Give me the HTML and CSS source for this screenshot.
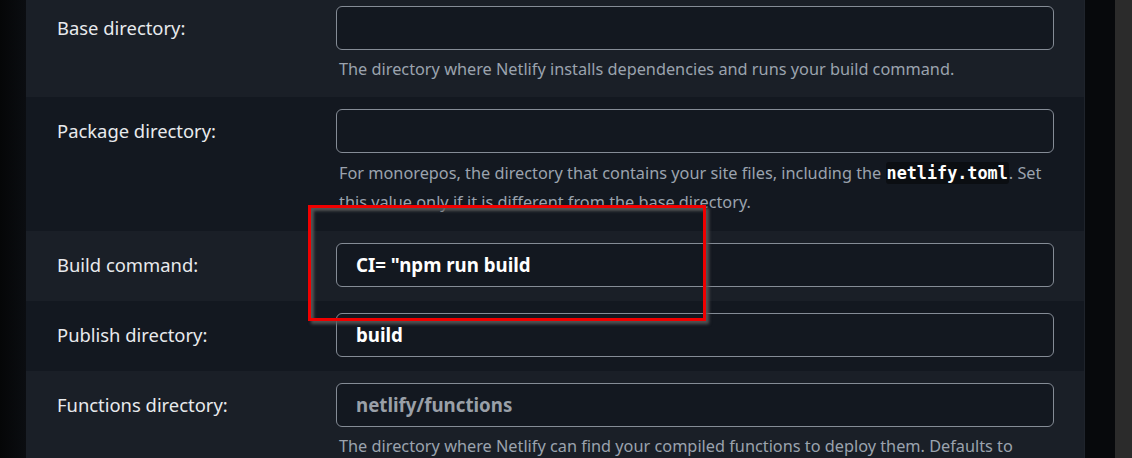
FILE: index.html
```html
<!DOCTYPE html>
<html lang="en">
<head>
<meta charset="utf-8">
<link rel="stylesheet" href="styles.css">
</head>
<body>
<div class="page">
  <div class="edge-left"></div>
  <div class="panel">
    <div class="row row-light with-help">
      <div class="label">Base directory:</div>
      <div class="field">
        <div class="input"></div>
        <p class="help">The directory where Netlify installs dependencies and runs your build command.</p>
      </div>
    </div>
    <div class="row row-dark with-help">
      <div class="label">Package directory:</div>
      <div class="field">
        <div class="input"></div>
        <p class="help help-multi">For monorepos, the directory that contains your site files, including the <code>netlify.toml</code>. Set this value only if it is different from the base directory.</p>
      </div>
    </div>
    <div class="row row-light">
      <div class="label">Build command:</div>
      <div class="field">
        <div class="input"><span class="value">CI= "npm run build</span></div>
      </div>
    </div>
    <div class="row row-dark">
      <div class="label">Publish directory:</div>
      <div class="field">
        <div class="input"><span class="value">build</span></div>
      </div>
    </div>
    <div class="row row-light with-help">
      <div class="label">Functions directory:</div>
      <div class="field">
        <div class="input"><span class="placeholder">netlify/functions</span></div>
        <p class="help">The directory where Netlify can find your compiled functions to deploy them. Defaults to</p>
      </div>
    </div>
  </div>
  <div class="edge-right"></div>
  <div class="edge-gray"></div>
  <div class="highlight"></div>
</div>
</body>
</html>
```

FILE: styles.css
```css
html, body {
  margin: 0;
  padding: 0;
  background: #2b2b2b;
  overflow: hidden;
}
.page {
  position: relative;
  display: flex;
  align-items: flex-start;
  width: 1132px;
  height: 458px;
  overflow: hidden;
  font-family: "Noto Sans", "Open Sans", sans-serif;
}
.edge-left {
  width: 26px;
  height: 100%;
  flex: none;
  background: linear-gradient(to right, #050607, #0b0d11);
}
.panel {
  width: 1059px;
  flex: none;
  margin-top: -6px;
  border-right: 1px solid #1f242c;
  box-sizing: border-box;
}
.edge-right {
  width: 30px;
  height: 100%;
  flex: none;
  background: #07090c;
}
.edge-gray {
  flex: 1;
  height: 100%;
  background: #2b2b2b;
}
.row {
  display: grid;
  grid-template-columns: 279px 718px;
  padding: 12px 0 14px 31px;
}
.row.with-help { padding-bottom: 13px; }
.row-light { background: #1a1f27; }
.row-dark { background: #131820; }
.label {
  height: 44px;
  line-height: 44px;
  font-size: 18.4px;
  color: #e8eaed;
}
.input {
  height: 44px;
  box-sizing: border-box;
  border: 1px solid #858c96;
  border-radius: 6px;
  background: #131820;
  padding: 0 19px;
  line-height: 42px;
  font-size: 18.7px;
  font-weight: 700;
}
.value { color: #ffffff; }
.placeholder { color: #9aa0a8; }
.help {
  margin: 5px 0 0;
  padding-left: 3px;
  font-size: 16.3px;
  line-height: 29px;
  color: #9ba3ae;
}
.help-multi {
  padding-top: 1px;
  padding-bottom: 1px;
}
.help code {
  font-family: "DejaVu Sans Mono", monospace;
  font-weight: 700;
  font-size: 16.8px;
  color: #ffffff;
  background: #0b0e12;
  padding: 1px 1px;
  border-radius: 3px;
}
.highlight {
  position: absolute;
  left: 308px;
  top: 205px;
  width: 398px;
  height: 116px;
  box-sizing: border-box;
  border: 3px solid #f00000;
  box-shadow: 3px 3px 3px rgba(90, 90, 90, 0.9), inset 3px 3px 3px rgba(90, 90, 90, 0.9);
}
```
